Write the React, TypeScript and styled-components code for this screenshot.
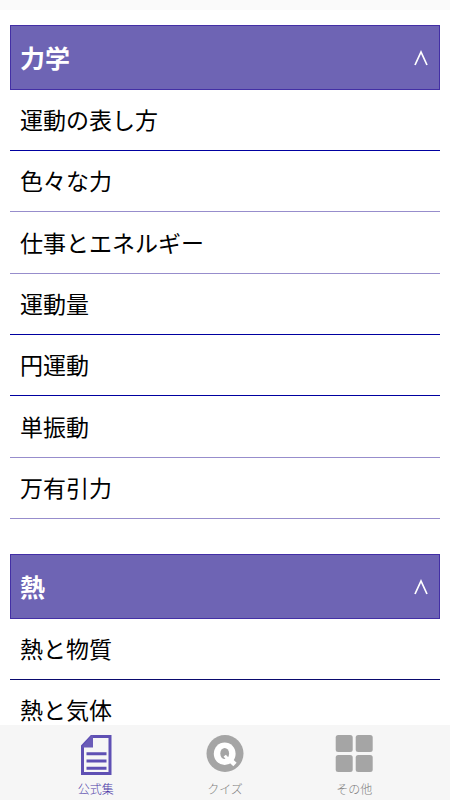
import React, { useState } from "react";
import styled, { createGlobalStyle } from "styled-components";

const GlobalStyle = createGlobalStyle`
  *, *::before, *::after { box-sizing: border-box; }
  html, body, #root { height: 100%; }
  body {
    margin: 0;
    overflow: hidden;
    background: #fff;
    color: #000;
    font-family: "Noto Sans CJK JP", sans-serif;
  }
`;

const Screen = styled.div`
  height: 100%;
  display: flex;
  flex-direction: column;
`;

const StatusStrip = styled.div`
  flex: none;
  height: 10px;
  background: #fafafa;
`;

const Content = styled.main`
  flex: 1;
  min-height: 0;
  overflow: hidden auto;
  scrollbar-width: none;
  padding: 15px 10px;
  display: flex;
  flex-direction: column;
  gap: 35px;
`;

const Section = styled.section`
  flex: none;
`;

const Heading = styled.h2`
  margin: 0;
`;

const Toggle = styled.button`
  width: 100%;
  height: 65px;
  padding: 0 10px 2px 9px;
  display: flex;
  align-items: center;
  justify-content: space-between;
  border: 1px solid #432fa5;
  border-radius: 0;
  background: #6e64b4;
  color: #fff;
  font: inherit;
  font-size: 25px;
  font-weight: 700;
  line-height: 36px;
  cursor: pointer;
`;

const Caret = styled.svg`
  width: 16px;
  height: 18px;
  fill: none;
  stroke: #fff;
  stroke-width: 1.7;
`;

const TopicList = styled.ul`
  margin: 0;
  padding: 0;
  list-style: none;
`;

const Topic = styled.li<{ $line: string }>`
  height: 61px;
  border-bottom: 1px solid ${(p) => p.$line};
  &:nth-child(3n) { height: 62px; }
`;

const TopicLink = styled.a`
  height: 100%;
  padding: 0 10px 2px;
  display: flex;
  align-items: center;
  color: inherit;
  font-size: 23px;
  font-weight: 400;
  line-height: 32px;
  text-decoration: none;
`;

const TabBar = styled.nav`
  flex: none;
  height: 75px;
  padding: 0 31px;
  display: grid;
  grid-template-columns: repeat(3, 1fr);
  background: #f6f6f6;
`;

const Tab = styled.button<{ $active: boolean }>`
  padding: 10px 0 0;
  display: flex;
  flex-direction: column;
  align-items: center;
  gap: 5px;
  border: 0;
  background: none;
  color: ${(p) => (p.$active ? "#4c3aa8" : "#808080")};
  font: inherit;
  font-size: 12px;
  font-weight: 300;
  line-height: 18px;
  cursor: pointer;
`;

const TabIcon = styled.svg`
  width: 40px;
  height: 40px;
`;

const BLUE = "#0000a0";
const NAVY = "#0a0a6e";
const LILAC = "#978dcc";

const sections = [
  {
    title: "力学",
    topics: [
      ["運動の表し方", BLUE],
      ["色々な力", LILAC],
      ["仕事とエネルギー", LILAC],
      ["運動量", BLUE],
      ["円運動", BLUE],
      ["単振動", LILAC],
      ["万有引力", LILAC],
    ],
  },
  {
    title: "熱",
    topics: [
      ["熱と物質", NAVY],
      ["熱と気体", LILAC],
    ],
  },
];

function DocumentIcon() {
  return (
    <TabIcon viewBox="0 0 40 40" aria-hidden="true">
      <path d="M15.5 1.5H34V38.5H6.5V11Z" fill="#f6f6f6" stroke="#5f50b4" strokeWidth="3" />
      <path d="M15.5 0.5L5.5 12.5H17V0.5Z" fill="#6a5cb8" />
      <path d="M10.5 18.7H30.5M10.5 26H30.5M10.5 33.3H30.5" stroke="#5f50b4" strokeWidth="3" />
    </TabIcon>
  );
}

function QuizIcon() {
  return (
    <TabIcon viewBox="0 0 40 40" aria-hidden="true">
      <circle cx="20" cy="18.5" r="18.5" fill="#a5a5a5" />
      <ellipse cx="19.7" cy="18.7" rx="10.9" ry="11.3" fill="#fff" />
      <path d="M23.5 23.5L30 29.5" stroke="#fff" strokeWidth="4.8" />
      <ellipse cx="19.7" cy="18.5" rx="4.4" ry="5.6" fill="#a5a5a5" />
      <path d="M18.6 21.4L20.8 19.8L25 24L22 26Z" fill="#fff" />
    </TabIcon>
  );
}

function GridIcon() {
  return (
    <TabIcon viewBox="0 0 40 40" aria-hidden="true" fill="#a5a5a5">
      <rect x="1.7" y="0" width="17" height="17" rx="2.5" />
      <rect x="21.7" y="0" width="17" height="17" rx="2.5" />
      <rect x="1.7" y="20" width="17" height="17" rx="2.5" />
      <rect x="21.7" y="20" width="17" height="17" rx="2.5" />
    </TabIcon>
  );
}

const tabs = [
  { label: "公式集", Icon: DocumentIcon },
  { label: "クイズ", Icon: QuizIcon },
  { label: "その他", Icon: GridIcon },
];

function TopicSection({ title, topics }: { title: string; topics: string[][] }) {
  const [open, setOpen] = useState(true);
  return (
    <Section>
      <Heading>
        <Toggle type="button" aria-expanded={open} onClick={() => setOpen(!open)}>
          {title}
          <Caret viewBox="0 0 16 18" aria-hidden="true">
            <path d={open ? "M2 17L8 4L14 17" : "M2 4L8 17L14 4"} />
          </Caret>
        </Toggle>
      </Heading>
      {open && (
        <TopicList>
          {topics.map(([name, line]) => (
            <Topic key={name} $line={line}>
              <TopicLink href="#">{name}</TopicLink>
            </Topic>
          ))}
        </TopicList>
      )}
    </Section>
  );
}

export default function App() {
  const [active, setActive] = useState(0);
  return (
    <Screen>
      <GlobalStyle />
      <StatusStrip />
      <Content>
        {sections.map((s) => (
          <TopicSection key={s.title} title={s.title} topics={s.topics} />
        ))}
      </Content>
      <TabBar>
        {tabs.map(({ label, Icon }, i) => (
          <Tab key={label} type="button" $active={i === active} onClick={() => setActive(i)}>
            <Icon />
            {label}
          </Tab>
        ))}
      </TabBar>
    </Screen>
  );
}
